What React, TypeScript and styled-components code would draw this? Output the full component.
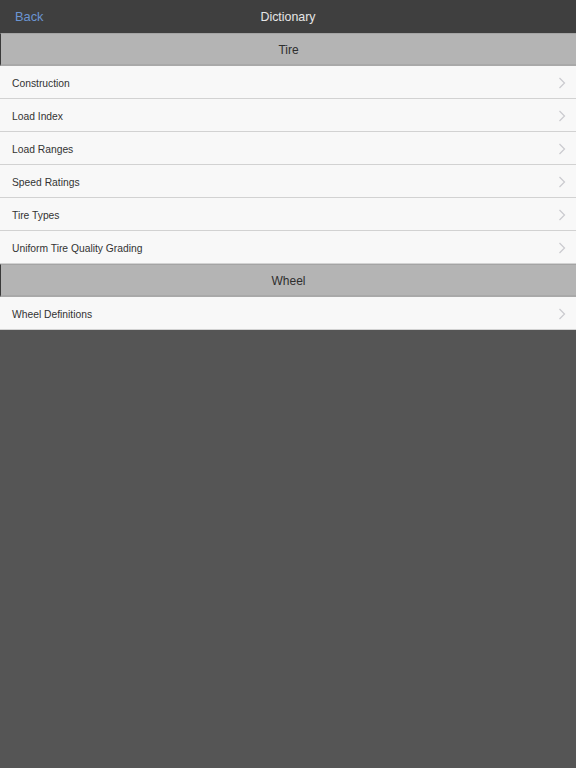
import React from "react";
import styled, { createGlobalStyle } from "styled-components";

const Global = createGlobalStyle`
  html, body { margin: 0; padding: 0; background: #555555; }
  body { font-family: "Liberation Sans", Arial, sans-serif; }
`;

const Page = styled.div`
  width: 576px;
  min-height: 768px;
  background: #555555;
  display: flex;
  flex-direction: column;
`;

const NavBar = styled.div`
  height: 33px;
  background: #3f3f3f;
  display: grid;
  grid-template-columns: 1fr auto 1fr;
  align-items: center;
  box-sizing: border-box;
`;

const BackButton = styled.span`
  color: #6b95d2;
  font-size: 12.8px;
  padding-left: 15px;
  justify-self: start;
`;

const Title = styled.span`
  color: #e6e6e6;
  font-size: 12.4px;
`;

const SectionHeader = styled.div`
  height: 33px;
  box-sizing: border-box;
  background: #b4b4b4;
  border-top: 1px solid #a4a4a4;
  border-left: 1px solid #3a3a3a;
  border-bottom: 2px solid #a9a9a9;
  display: flex;
  align-items: center;
  justify-content: center;
  color: #2e2e2e;
  font-size: 12px;
  padding-top: 2px;
`;

const Row = styled.div`
  height: 33px;
  box-sizing: border-box;
  background: #f8f8f8;
  border-bottom: 1px solid #d2d2d2;
  display: flex;
  align-items: center;
  justify-content: space-between;
  padding: 2px 10px 0 12px;
  color: #333333;
  font-size: 10.3px;
`;

const Chevron = () => (
  <svg width="8" height="12" viewBox="0 0 8 12">
    <path d="M1.5 1 L6.5 6 L1.5 11" fill="none" stroke="#cacacf" strokeWidth="1.2" />
  </svg>
);

const sections = [
  {
    title: "Tire",
    items: [
      "Construction",
      "Load Index",
      "Load Ranges",
      "Speed Ratings",
      "Tire Types",
      "Uniform Tire Quality Grading",
    ],
  },
  { title: "Wheel", items: ["Wheel Definitions"] },
];

export default function App() {
  return (
    <Page>
      <Global />
      <NavBar>
        <BackButton>Back</BackButton>
        <Title>Dictionary</Title>
        <span />
      </NavBar>
      {sections.map((s) => (
        <React.Fragment key={s.title}>
          <SectionHeader>{s.title}</SectionHeader>
          {s.items.map((i) => (
            <Row key={i}>
              <span>{i}</span>
              <Chevron />
            </Row>
          ))}
        </React.Fragment>
      ))}
    </Page>
  );
}
